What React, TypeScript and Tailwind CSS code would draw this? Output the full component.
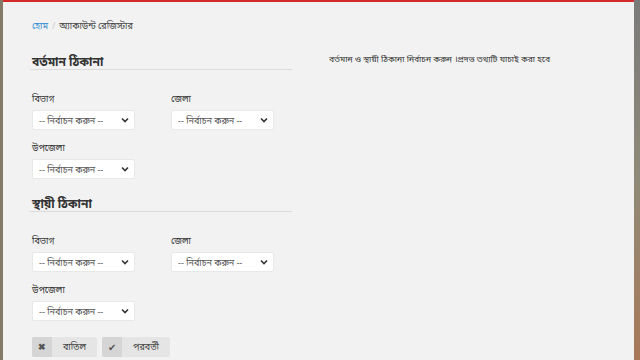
import React from "react";

function Chevron() {
  return (
    <svg width="8" height="6" viewBox="0 0 8 6" className="shrink-0">
      <path d="M1 1.5 L4 4.5 L7 1.5" fill="none" stroke="#333" strokeWidth="1.6" />
    </svg>
  );
}

function Select() {
  return (
    <div className="w-[103px] h-[20px] bg-white rounded-[2px] border border-[#e8e8e8] flex items-center justify-between pl-[6px] pr-[5px]">
      <span className="text-[9px] text-[#555] leading-none">-- নির্বাচন করুন --</span>
      <Chevron />
    </div>
  );
}

function Field({ label }: { label: string }) {
  return (
    <div className="flex flex-col gap-[6px] w-[103px]">
      <span className="text-[9px] text-[#333] leading-[13px] mt-[1px] -mb-[1px]">{label}</span>
      <Select />
    </div>
  );
}

function Section({ title }: { title: string }) {
  return (
    <div className="flex flex-col">
      <div className="w-[262px] -ml-[2px] pl-[2px] border-b border-[#dcdcdc]">
        <h2 className="text-[12px] font-bold text-[#333] leading-[14px]">{title}</h2>
      </div>
      <div className="mt-[21px] flex flex-col gap-[10px]">
        <div className="flex gap-[36px]">
          <Field label="বিভাগ" />
          <Field label="জেলা" />
        </div>
        <Field label="উপজেলা" />
      </div>
    </div>
  );
}

export default function App() {
  return (
    <div
      className="w-[640px] h-[360px] overflow-hidden flex bg-[#f2f2f2]"
      style={{ fontFamily: '"Noto Sans", "Noto Sans Bengali", sans-serif' }}
    >
      <div className="w-[3px] h-full bg-[#857a68]" />
      <div className="flex-1 flex flex-col">
        <div className="h-[2px] bg-[#d42a2a]" />
        <div className="flex pl-[29px]">
          <div className="w-[264px] flex flex-col">
            <div className="mt-[17px] text-[9px] leading-[14px] flex items-center gap-[4px]">
              <span className="text-[#2f8ad0]">হোম</span>
              <span className="text-[#ccc]">/</span>
              <span className="text-[#444]">অ্যাকাউন্ট রেজিস্টার</span>
            </div>
            <div className="mt-[22px]">
              <Section title="বর্তমান ঠিকানা" />
            </div>
            <div className="mt-[18px]">
              <Section title="স্থায়ী ঠিকানা" />
            </div>
            <div className="mt-[16px] flex gap-[5px]">
              <button className="w-[65px] h-[20px] flex rounded-[2px] overflow-hidden bg-[#e5e5e5]">
                <span className="w-[20px] h-full bg-[#d5d5d5] flex items-center justify-center text-[9px] font-bold text-[#555]">✖</span>
                <span className="flex-1 flex items-center justify-center text-[9px] text-[#444]">বাতিল</span>
              </button>
              <button className="w-[68px] h-[20px] flex rounded-[2px] overflow-hidden bg-[#e5e5e5]">
                <span className="w-[20px] h-full bg-[#d5d5d5] flex items-center justify-center text-[10px] text-[#555]">✔</span>
                <span className="flex-1 flex items-center justify-center text-[9px] text-[#444]">পরবর্তী</span>
              </button>
            </div>
          </div>
          <div className="ml-[33px] mt-[50px] text-[8.5px] leading-[14px] text-[#333]">
            বর্তমান ও স্থায়ী ঠিকানা নির্বাচন করুন ।প্রদত্ত তথ্যটি যাচাই করা হবে
          </div>
        </div>
      </div>
      <div className="w-[6px] h-full bg-gradient-to-b from-[#7a7a7a] via-[#8f8a78] to-[#a87858]" />
    </div>
  );
}
